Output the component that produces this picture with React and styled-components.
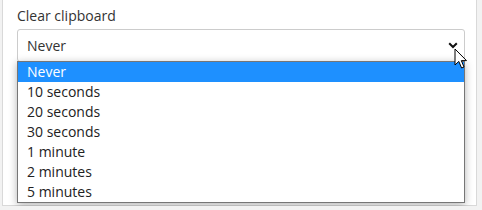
import React from "react";
import styled, { createGlobalStyle } from "styled-components";

const Global = createGlobalStyle`
  html, body { margin: 0; padding: 0; background: #f2f2f2; }
  body { font-family: "Open Sans", "Liberation Sans", sans-serif; }
`;

const Card = styled.div`
  box-sizing: border-box;
  margin-left: 2px;
  width: 475px;
  height: 206px;
  background: #fff;
  border: 1px solid #d9d9d9;
  border-top: none;
  padding: 6px 0 0 14px;
`;

const Label = styled.div`
  font-size: 14px;
  line-height: 20px;
  color: #333;
  margin-bottom: 3px;
`;

const SelectWrap = styled.div`
  position: relative;
  width: 448px;
`;

const SelectBox = styled.div`
  box-sizing: border-box;
  height: 33px;
  border: 1px solid #ccc;
  border-radius: 3px;
  background: #fff;
  display: flex;
  align-items: center;
  justify-content: space-between;
  padding: 0 6px 0 9px;
  font-size: 14px;
  color: #333;
`;

const Chevron = styled.svg`
  width: 10px;
  height: 7px;
  margin-top: -1px;
`;

const List = styled.ul`
  position: absolute;
  top: 32px;
  left: 0;
  right: 0;
  margin: 0;
  padding: 0;
  list-style: none;
  background: #fff;
  border: 1px solid #767676;
  box-shadow: 0 2px 8px rgba(0, 0, 0, 0.3);
  z-index: 2;
`;

const Option = styled.li`
  height: 20px;
  line-height: 20px;
  padding-left: 9px;
  font-size: 14px;
  color: ${(p) => (p.$active ? "#fff" : "#222")};
  background: ${(p) => (p.$active ? "#1e90ff" : "transparent")};
`;

const Cursor = styled.svg`
  position: absolute;
  left: 437px;
  top: 19px;
  width: 14px;
  height: 22px;
  z-index: 3;
`;

const options = [
  "Never",
  "10 seconds",
  "20 seconds",
  "30 seconds",
  "1 minute",
  "2 minutes",
  "5 minutes",
];

export default function App() {
  return (
    <>
      <Global />
      <Card>
        <Label>Clear clipboard</Label>
        <SelectWrap>
          <SelectBox>
            <span>Never</span>
            <Chevron viewBox="0 0 10 7">
              <path d="M1.2 1.2 L5 5 L8.8 1.2" fill="none" stroke="#111" strokeWidth="2" />
            </Chevron>
          </SelectBox>
          <List>
            {options.map((o, i) => (
              <Option key={o} $active={i === 0}>
                {o}
              </Option>
            ))}
          </List>
          <Cursor viewBox="0 0 14 22">
            <path
              d="M1 1 L1 17 L4.8 13.4 L7.6 20 L10 19 L7.3 12.6 L12.5 12.6 Z"
              fill="#fff"
              stroke="#000"
              strokeWidth="1"
              strokeLinejoin="round"
            />
          </Cursor>
        </SelectWrap>
      </Card>
    </>
  );
}
